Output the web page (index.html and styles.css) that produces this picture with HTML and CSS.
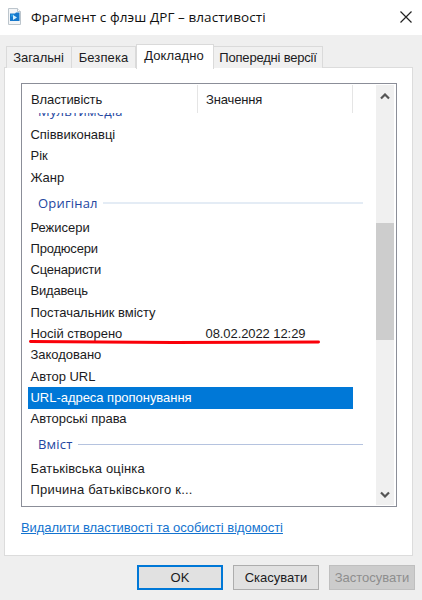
FILE: index.html
```
<!DOCTYPE html>
<html lang="uk">
<head>
<meta charset="utf-8">
<title>Фрагмент с флэш ДРГ – властивості</title>
<link rel="stylesheet" href="styles.css">
</head>
<body>
<div class="dialog">
  <header class="titlebar">
    <svg class="file-icon" width="13" height="17" viewBox="0 0 13 17">
      <path d="M.5.5h9l3 3v13H.5z" fill="#f3f5f7" stroke="#bcc5cc"/>
      <path d="M9.5.5v3h3" fill="#fff" stroke="#bcc5cc"/>
      <path d="M2 5.5h5l1-1h3.500v8.500H2z" fill="#1678cc"/>
      <path d="M3 6.500h3v2H3z" fill="#2ea2e8"/>
      <path d="M5 7l4 2.500L5 12z" fill="#d5f1ff"/>
    </svg>
    <h1 class="title">Фрагмент с флэш ДРГ – властивості</h1>
    <svg class="close" width="12" height="12" viewBox="0 0 12 12"><path d="M.5.5l11 11M11.5.5l-11 11" stroke="#222" stroke-width="1.2"/></svg>
  </header>
  <nav class="tabs">
    <div class="tab t1"><span>Загальні</span></div>
    <div class="tab t2"><span>Безпека</span></div>
    <div class="tab active"><span>Докладно</span></div>
    <div class="tab t4"><span>Попередні версії</span></div>
  </nav>
  <main class="page">
    <div class="list">
      <div class="content">
        <div class="columns"><div class="col name">Властивість</div><div class="col value">Значення</div></div>
        <div class="rows">
          <div class="group clipped"><span>Мультимедіа</span></div>
          <div class="row"><span>Співвиконавці</span></div>
          <div class="row"><span>Рік</span></div>
          <div class="row"><span>Жанр</span></div>
          <div class="group pale"><span>Оригінал</span></div>
          <div class="row"><span>Режисери</span></div>
          <div class="row tight"><span>Продюсери</span></div>
          <div class="row tight"><span>Сценаристи</span></div>
          <div class="row tight"><span>Видавець</span></div>
          <div class="row"><span>Постачальник вмісту</span></div>
          <div class="row marked"><span>Носій створено</span><span class="date">08.02.2022 12:29</span>
            <svg class="marker" width="294" height="6" viewBox="0 0 294 6"><path d="M2.500 2.500L145 3.500L290.500 3" fill="none" stroke="#fa0009" stroke-width="3" stroke-linecap="round"/></svg>
          </div>
          <div class="row"><span>Закодовано</span></div>
          <div class="row"><span>Автор URL</span></div>
          <div class="row selected"><span>URL-адреса пропонування</span></div>
          <div class="row"><span>Авторські права</span></div>
          <div class="group second"><span>Вміст</span></div>
          <div class="row wide"><span>Батьківська оцінка</span></div>
          <div class="row wider"><span>Причина батьківського к...</span></div>
        </div>
      </div>
      <div class="scrollbar">
        <svg width="10" height="7" viewBox="0 0 10 7"><path d="M1 5.500l4-4 4 4" fill="none" stroke="#555" stroke-width="2.200"/></svg>
        <div class="thumb"></div>
        <svg class="down" width="10" height="7" viewBox="0 0 10 7"><path d="M1 1.500l4 4 4-4" fill="none" stroke="#555" stroke-width="2.200"/></svg>
      </div>
    </div>
    <a class="link">Видалити властивості та особисті відомості</a>
  </main>
  <footer class="buttons">
    <button class="ok">OK</button>
    <button class="cancel">Скасувати</button>
    <button class="apply" disabled>Застосувати</button>
  </footer>
</div>
</body>
</html>
```
FILE: styles.css
```
* { box-sizing: border-box; }
body { margin: 0; background: #efefef; font: 13px/16px "Liberation Sans", Arial, sans-serif; color: #1b1b22; }
.dialog { width: 422px; height: 600px; overflow: hidden; display: flex; flex-direction: column; }
.titlebar { height: 35px; flex: none; background: #fff; display: flex; align-items: center; padding: 0 10px 2px 8px; }
.title { margin: 0 auto 0 10px; font: 13.5px/18px "Open Sans", "Noto Sans", sans-serif; letter-spacing: .07px; color: #111; white-space: nowrap; }
.tabs { height: 33px; flex: none; display: flex; align-items: flex-end; padding-left: 6px; position: relative; }
.tab { height: 22px; border: 1px solid #dadada; border-bottom: 0; background: #f0f0f0; display: flex; align-items: center; justify-content: center; white-space: nowrap; letter-spacing: -.2px; }
.t1 { width: 66px; letter-spacing: -.1px; padding-right: 1px; }
.t2 { width: 64px; border-left: 0; letter-spacing: .1px; }
.active { width: 78px; height: 25px; margin-bottom: -1px; background: #fff; padding: 0 2px 2px 0; letter-spacing: .1px; position: relative; }
.t4 { width: 109px; border-left: 0; }
.page { width: 409px; height: 489px; flex: none; margin-left: 4px; border: 1px solid #dcdcdc; background: #fff; padding: 15px 0 0 16px; margin-top: -1px; }
.list { width: 376px; height: 424px; border: 1px solid #8b8e98; display: flex; background: #fff; }
.content { width: 354px; overflow: hidden; padding-top: 1px; }
.columns { height: 28px; display: flex; }
.col { border-right: 1px solid #e5e5e5; padding: 7px 0 0 8px; }
.name { width: 176px; padding-left: 9px; letter-spacing: -.1px; }
.value { width: 155px; letter-spacing: -.15px; }
.rows { height: 392px; overflow: hidden; }
.row { height: 21.3px; margin: 0 23px 0 6px; padding-left: 2.5px; display: flex; align-items: center; white-space: nowrap; letter-spacing: -.03px; position: relative; }
.tight { letter-spacing: -.2px; }
.wide { letter-spacing: .15px; }
.wider { letter-spacing: .23px; }
.selected { background: #0078d7; color: #fff; }
.date { position: absolute; left: 177.5px; letter-spacing: -.08px; }
.marker { position: absolute; left: 0; top: 16px; z-index: 1; }
.group { height: 28.5px; padding: 1px 13px 0 16px; display: flex; align-items: center; font: 13px/18px "Open Sans", "Noto Sans", sans-serif; letter-spacing: .2px; color: #24469f; }
.group::after { content: ""; flex: 1; height: 1px; margin-left: 5px; background: #b5c3df; }
.pale::after { height: 2px; background: #e4ecf5; }
.second { height: 28px; }
.clipped { height: 28px; margin-top: -16.5px; }
.clipped::after { display: none; }
.scrollbar { width: 18px; margin: 1px 0 1px; background: #f0f0f0; display: flex; flex-direction: column; align-items: center; padding: 8px 0 7px; }
.thumb { width: 18px; height: 117px; margin-top: 123px; background: #cdcdcd; }
.down { margin-top: auto; }
.link { display: inline-block; margin-top: 13px; color: #1373cf; text-decoration: underline; letter-spacing: -.05px; white-space: nowrap; }
.buttons { display: flex; padding: 9px 7px 0 137px; }
button { height: 25px; width: 86px; padding: 0; border: 1px solid #adadad; background: #e1e1e1; font: inherit; color: #1b1b22; white-space: nowrap; }
.ok { border: 2px solid #0078d7; }
.cancel { margin-left: 10px; }
.apply { margin-left: 10px; background: #ccc; border-color: #bfbfbf; color: #8e8e8e; }
```
